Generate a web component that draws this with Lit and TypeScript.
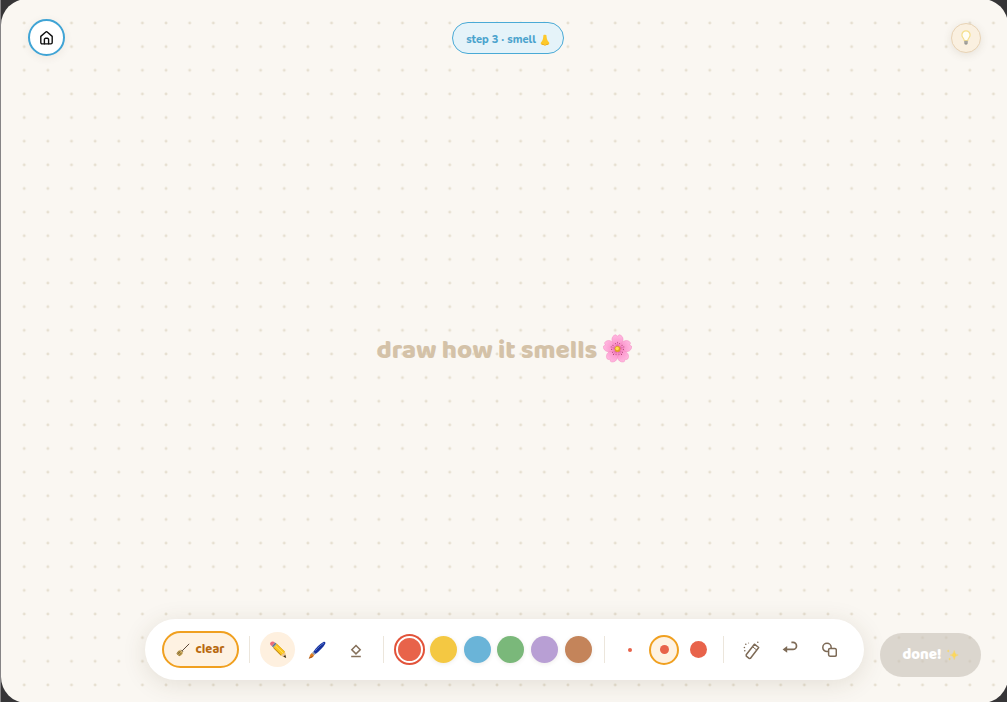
import { LitElement, html, css, svg } from "lit";
import { customElement, state } from "lit/decorators.js";
import { classMap } from "lit/directives/class-map.js";

const COLORS = [
  { name: "red", value: "#e8634a" },
  { name: "yellow", value: "#f4c842" },
  { name: "blue", value: "#6ab4d8" },
  { name: "green", value: "#7ab87a" },
  { name: "purple", value: "#b89fd4" },
  { name: "brown", value: "#c4845a" },
];

const SIZES = [
  { name: "small", dot: 4 },
  { name: "medium", dot: 9 },
  { name: "large", dot: 17 },
];

const houseIcon = html`<svg width="13" height="14" viewBox="0 0 13 14" fill="none" stroke="#111" stroke-width="1.4" stroke-linecap="round" stroke-linejoin="round">
  <path d="M.8 5.4 5.8 1a1.1 1.1 0 0 1 1.4 0L12.2 5.4V11.6a1.3 1.3 0 0 1-1.3 1.3H2.1A1.3 1.3 0 0 1 .8 11.6Z" />
  <path d="M4.4 12.8V8.5A1.2 1.2 0 0 1 5.6 7.3H7.4A1.2 1.2 0 0 1 8.6 8.5V12.8" />
</svg>`;

const noseIcon = html`<svg width="10" height="12" viewBox="0 0 10 12">
  <path d="M3.4 1.2C3.6.5 6.1.5 6.4 1.2 6.6 3.6 7 6 8.3 7.4 9.8 8.6 9.6 10.6 8 10.6 7 10.7 6.6 11.4 5 11.4S3 10.7 2 10.6C.4 10.6.2 8.6 1.7 7.4 3 6 3.2 3.6 3.4 1.2Z" fill="#fdc92b" />
  <path d="M1.3 9.9C2.5 9.5 3.3 10.2 4 10.7 4.7 11 5.3 11 6 10.7 6.7 10.2 7.5 9.5 8.7 9.9 8 10.9 6.8 10.7 6.2 11.1 5.4 11.5 4.6 11.5 3.8 11.1 3.2 10.7 2 10.9 1.3 9.9Z" fill="#e8a01a" />
</svg>`;

const bulbIcon = html`<svg width="10" height="16" viewBox="0 0 10 16">
  <path d="M5 .8A4.1 4.1 0 0 0 .9 4.9C.9 7.4 3 8.3 3.3 10.6H6.7C7 8.3 9.1 7.4 9.1 4.9A4.1 4.1 0 0 0 5 .8Z" fill="#fffef6" stroke="#f5df8c" stroke-width="1.2" />
  <path d="M3.2 10.8H6.8V13.3L5.9 14.8H4.1L3.2 13.3Z" fill="#b9b8b2" />
  <path d="M3.4 12H6.6M3.8 13.7H6.2" stroke="#81807b" stroke-width=".7" />
</svg>`;

const flowerIcon = html`<svg width="29" height="29" viewBox="0 0 30 30">
  <defs>
    <radialGradient id="petal" gradientUnits="userSpaceOnUse" cx="15" cy="15.5" r="14">
      <stop offset="0" stop-color="#e0559c" />
      <stop offset=".35" stop-color="#fb93cb" />
      <stop offset="1" stop-color="#ffb6df" />
    </radialGradient>
  </defs>
  ${[0, 72, 144, 216, 288].map(
    (a) => svg`<g transform=${`rotate(${a} 15 15.5)`}>
      <path d="M15 15.5C11.6 12.4 8.4 7.8 9.4 4.2 10.2 1.7 12.4.6 13.5.9L15 2.4 16.5.9C17.6.6 19.8 1.7 20.6 4.2 21.6 7.8 18.4 12.4 15 15.5Z" fill="url(#petal)" stroke="#f07cb9" stroke-width=".4" />
      <path d="M15 14V9.2M15 14 13.2 10.4M15 14 16.8 10.4" stroke="#d04a90" stroke-width=".4" />
      <circle cx="15" cy="8.6" r=".5" fill="#9b2c5c" />
      <circle cx="12.8" cy="9.8" r=".5" fill="#9b2c5c" />
      <circle cx="17.2" cy="9.8" r=".5" fill="#9b2c5c" />
    </g>`
  )}
  <circle cx="15" cy="15.5" r="3" fill="#e0a024" />
  <circle cx="14.7" cy="15" r="1.8" fill="#ffdf4d" />
</svg>`;

const broomIcon = html`<svg width="14" height="14" viewBox="0 0 14 14">
  <path d="M12.9 1.1 6.4 7.6" stroke="#5c4636" stroke-width="1" stroke-linecap="round" />
  <path d="M4.2 7 7 9.8C6.3 11.5 5.1 12.8 3.2 13.2L.7 10.9C.8 8.9 2.2 7.6 4.2 7Z" fill="#cdaa5a" />
  <path d="M5 6.8 7.2 9M1.6 11.6 4.4 8.6M2.9 12.8 5.5 9.8M.9 10.6 3.4 8.1" stroke="#6f5a2c" stroke-width=".8" />
</svg>`;

const pencilIcon = html`<svg width="18" height="18" viewBox="0 0 18 18">
  <path d="M4.1 6.4 7.5 2.6 15.9 10.7 17.1 16.9 11.5 14.2Z" fill="#fac51f" />
  <path d="M6.2 4.6 14.3 12.3" stroke="#ffdf62" stroke-width="1" />
  <path d="M4.3 6.6 11.9 14.1" stroke="#b97c14" stroke-width="1" />
  <path d="M7.5 2.8 15.8 10.7" stroke="#d69a16" stroke-width=".6" />
  <path d="M15.9 10.7 17.1 16.9 11.5 14.2C12.8 14.2 12.9 13.5 13.1 12.8 14.3 12.8 15.1 12.4 15.9 10.7Z" fill="#ecc595" />
  <path d="M16.3 14 17.2 17 14.3 15.6Z" fill="#2f2a28" />
  <path d="M2.6 4.8 5.8 1.3 7.7 3 4.3 6.6Z" fill="#8397ad" />
  <path d="M3.5 5.7 6.8 2.2" stroke="#4c6178" stroke-width=".7" />
  <path d="M2.9 5.1C1.1 3.8.5 2.7 1.5 1.5 2.6.3 4.5.2 5.9 1.5Z" fill="#ec6a7c" />
</svg>`;

const brushIcon = html`<svg width="18" height="18" viewBox="0 0 18 18">
  <path d="M5.3 10.8C8 6.9 12 2.8 15.4 1 16.9.4 17.8 1.3 17.2 2.7 15.4 6.2 11.4 10 7.5 13Z" fill="#17319c" />
  <path d="M7.6 9.4C10.4 6.3 13 4 15.7 2.2" stroke="#5c80e6" stroke-width=".9" stroke-linecap="round" />
  <path d="M5.3 10.8 7.5 13 6.1 14.3 3.8 12.1Z" fill="#8a95a5" />
  <path d="M3.8 12.1 6.1 14.3C5.2 16.7 3.1 17.3.9 17.3 1.9 16 1.6 13.4 3.8 12.1Z" fill="#e07c1e" />
  <path d="M.9 17.3C2.6 16.8 3.9 16.1 4.6 15" stroke="#8a4516" stroke-width=".8" fill="none" />
</svg>`;

const eraserIcon = html`<svg width="12" height="17" viewBox="0 0 12 17" fill="none" stroke="#85705a">
  <path d="M6 4.5 10.2 8.7 6 12.9 1.8 8.7Z" stroke-width="1.5" />
  <path d="M1.2 15.5H10.8" stroke-width="1.5" />
</svg>`;

const sprayIcon = html`<svg width="18" height="20" viewBox="0 0 18 20" fill="none" stroke="#7d6a56">
  <path d="M11.4 4.2 15.7 7.5 7.5 18.2 6.1 18.4 3.3 16.2 3.2 14.8Z" stroke-width="1.5" stroke-linejoin="round" />
  <path d="M9.6 6.8 13.7 10" stroke-width="1" />
  <g fill="#7d6a56" stroke="none">
    <circle cx="2.8" cy="4.2" r=".8" /><circle cx="1.4" cy="7.5" r=".8" /><circle cx="1.8" cy="10.7" r=".8" /><circle cx="14.8" cy="2.3" r=".8" /><circle cx="5.6" cy="3" r=".5" />
  </g>
</svg>`;

const undoIcon = html`<svg width="17" height="19" viewBox="0 0 17 19" fill="none" stroke="#7d6a56" stroke-width="1.7">
  <path d="M3 9.4H11A3.5 3.5 0 0 0 11 2.4H9.4" />
  <path d="M5.2 6V12.8L.6 9.4Z" fill="#7d6a56" stroke="none" />
</svg>`;

const shapesIcon = html`<svg width="15" height="15" viewBox="0 0 15 15" fill="none" stroke="#7d6a56" stroke-width="1.5">
  <circle cx="5" cy="5.4" r="4.2" />
  <rect x="6.6" y="6.6" width="7.7" height="7.6" rx="1.4" fill="#fff" />
</svg>`;

const sparklesIcon = html`<svg width="13" height="14" viewBox="0 0 13 14" fill="#fcd75c">
  <path d="M8.2 2.4Q8.7 6.6 12.2 7 8.7 7.4 8.2 11.6 7.7 7.4 4.2 7 7.7 6.6 8.2 2.4Z" stroke="#fcd75c" stroke-width=".4" />
  <path d="M2.2 1.4Q2.4 2.8 3.6 3 2.4 3.2 2.2 4.6 2 3.2.8 3 2 2.8 2.2 1.4Z" />
  <path d="M3.7 9.6Q3.9 10.9 5.1 11.1 3.9 11.3 3.7 12.6 3.5 11.3 2.3 11.1 3.5 10.9 3.7 9.6Z" />
</svg>`;

@customElement("app-root")
export class AppRoot extends LitElement {
  static styles = css`
    :host {
      display: block;
      background: linear-gradient(90deg, #868486 1px, #363537 1px);
      overflow: hidden;
      font-family: "Baloo 2", Lato, sans-serif;
    }
    button {
      font: inherit;
      padding: 0;
      margin: 0;
      border: 0;
      background: none;
      box-sizing: border-box;
      display: flex;
      align-items: center;
      justify-content: center;
      cursor: pointer;
    }
    svg {
      display: block;
      flex: none;
    }
    .stage {
      position: relative;
      display: grid;
      grid-template-rows: auto 1fr auto;
      min-height: calc(100vh + 2px);
      margin: -1px -1px -1px 1px;
      border-radius: 26px;
      overflow: hidden;
      background: #faf7f2;
    }
    .dots {
      position: absolute;
      inset: 0;
      width: 100%;
      height: 100%;
    }
    .header {
      grid-area: 1 / 1;
      position: relative;
      display: flex;
      justify-content: space-between;
      align-items: center;
      padding: 20px 27px 0;
    }
    .home {
      width: 37px;
      height: 37px;
      border-radius: 50%;
      border: 2px solid #40a4d5;
      background: #fff;
      box-shadow: 0 2px 8px rgba(90, 70, 40, 0.08);
    }
    .step {
      display: flex;
      align-items: center;
      gap: 4px;
      box-sizing: border-box;
      height: 32px;
      padding: 4px 13px 0;
      border: 1px solid #4aaad6;
      border-radius: 16px;
      background: #e5f3f9;
      color: #4ca3cd;
      font: 800 11px/16px Nunito, "Open Sans", sans-serif;
      white-space: nowrap;
    }
    .hint {
      width: 30px;
      height: 30px;
      border-radius: 50%;
      border: 1px solid #e8d3b5;
      background: #faf0e0;
      box-shadow: 0 2px 8px rgba(90, 70, 40, 0.12);
    }
    .prompt {
      grid-area: 1 / 1 / -1 / 1;
      position: relative;
      align-self: center;
      justify-self: center;
      display: flex;
      align-items: flex-start;
      gap: 6px;
      margin: 0;
      color: #d4c2a8;
      font-size: 26px;
      line-height: 34px;
      font-weight: 800;
    }
    .dock {
      grid-area: 3 / 1;
      position: relative;
      display: grid;
      grid-template-columns: 1fr auto 1fr;
      align-items: end;
      padding: 0 27px 23px;
    }
    .toolbar {
      grid-column: 2;
      display: flex;
      align-items: center;
      gap: 10px;
      padding: 12px 17px;
      border-radius: 31px;
      background: #fff;
      box-shadow: 0 4px 24px rgba(80, 60, 30, 0.13);
    }
    .clear {
      width: 77px;
      height: 37px;
      gap: 5px;
      border: 2px solid #f0a020;
      border-radius: 19px;
      background: #fef2e2;
      color: #b8690f;
      font-size: 13px;
      line-height: 16px;
      font-weight: 700;
    }
    .divider {
      width: 1px;
      height: 27px;
      background: #ece6dc;
    }
    .group {
      display: flex;
      align-items: center;
      gap: 4px;
    }
    .tool {
      width: 35px;
      height: 35px;
      border-radius: 50%;
    }
    .tool.active {
      background: #fef0df;
    }
    .swatches {
      display: flex;
      align-items: center;
      justify-content: space-between;
      width: 196px;
      padding: 0 2px;
    }
    .swatch {
      width: 27px;
      height: 27px;
      border-radius: 50%;
      box-shadow: 0 1px 4px rgba(80, 60, 30, 0.1);
    }
    .swatch.active {
      border: 2px solid #fff;
      box-shadow: 0 0 0 2px #e2533a;
    }
    .size {
      width: 30px;
      height: 30px;
      border-radius: 50%;
    }
    .size.active {
      border: 2px solid #f0a020;
      background: #fef2e2;
    }
    .dot {
      border-radius: 50%;
    }
    .done {
      grid-column: 3;
      justify-self: end;
      width: 101px;
      height: 44px;
      margin-bottom: 3px;
      gap: 4px;
      border-radius: 22px;
      background: rgba(200, 194, 184, 0.62);
      color: #fff;
      font-size: 15px;
      line-height: 20px;
      font-weight: 800;
    }
  `;

  @state() private tool = "pencil";
  @state() private color = COLORS[0].value;
  @state() private size = "medium";

  private toolButton(name: string, icon: unknown) {
    const active = this.tool === name;
    return html`<button
      class=${classMap({ tool: true, active })}
      aria-label=${name}
      aria-pressed=${active}
      @click=${() => (this.tool = name)}
    >${icon}</button>`;
  }

  render() {
    return html`
      <div class="stage">
        <svg class="dots" aria-hidden="true">
          <defs>
            <pattern id="grid" x="11.4" y="12.2" width="23.64" height="23.64" patternUnits="userSpaceOnUse">
              <circle cx="11.82" cy="11.82" r="1.45" fill="#e6dfd0" />
            </pattern>
          </defs>
          <rect x="11" y="12" width="100%" height="100%" fill="url(#grid)" />
        </svg>

        <header class="header">
          <button class="home" aria-label="home">${houseIcon}</button>
          <div class="step"><span>step 3 · smell</span>${noseIcon}</div>
          <button class="hint" aria-label="hint">${bulbIcon}</button>
        </header>

        <h1 class="prompt"><span>draw how it smells</span>${flowerIcon}</h1>

        <footer class="dock">
          <div class="toolbar" role="toolbar" aria-label="drawing tools">
            <button class="clear">${broomIcon}<span>clear</span></button>
            <span class="divider"></span>
            <div class="group">
              ${this.toolButton("pencil", pencilIcon)}
              ${this.toolButton("brush", brushIcon)}
              ${this.toolButton("eraser", eraserIcon)}
            </div>
            <span class="divider"></span>
            <div class="swatches">
              ${COLORS.map(
                (c) => html`<button
                  class=${classMap({ swatch: true, active: c.value === this.color })}
                  style="background-color:${c.value}"
                  aria-label=${c.name}
                  aria-pressed=${c.value === this.color}
                  @click=${() => (this.color = c.value)}
                ></button>`
              )}
            </div>
            <span class="divider"></span>
            <div class="group">
              ${SIZES.map(
                (s) => html`<button
                  class=${classMap({ size: true, active: s.name === this.size })}
                  aria-label=${s.name}
                  aria-pressed=${s.name === this.size}
                  @click=${() => (this.size = s.name)}
                ><span class="dot" style="width:${s.dot}px;height:${s.dot}px;background:${this.color}"></span></button>`
              )}
            </div>
            <span class="divider"></span>
            <div class="group">
              <button class="tool" aria-label="spray">${sprayIcon}</button>
              <button class="tool" aria-label="undo">${undoIcon}</button>
              <button class="tool" aria-label="shapes">${shapesIcon}</button>
            </div>
          </div>
          <button class="done"><span>done!</span>${sparklesIcon}</button>
        </footer>
      </div>
    `;
  }
}
